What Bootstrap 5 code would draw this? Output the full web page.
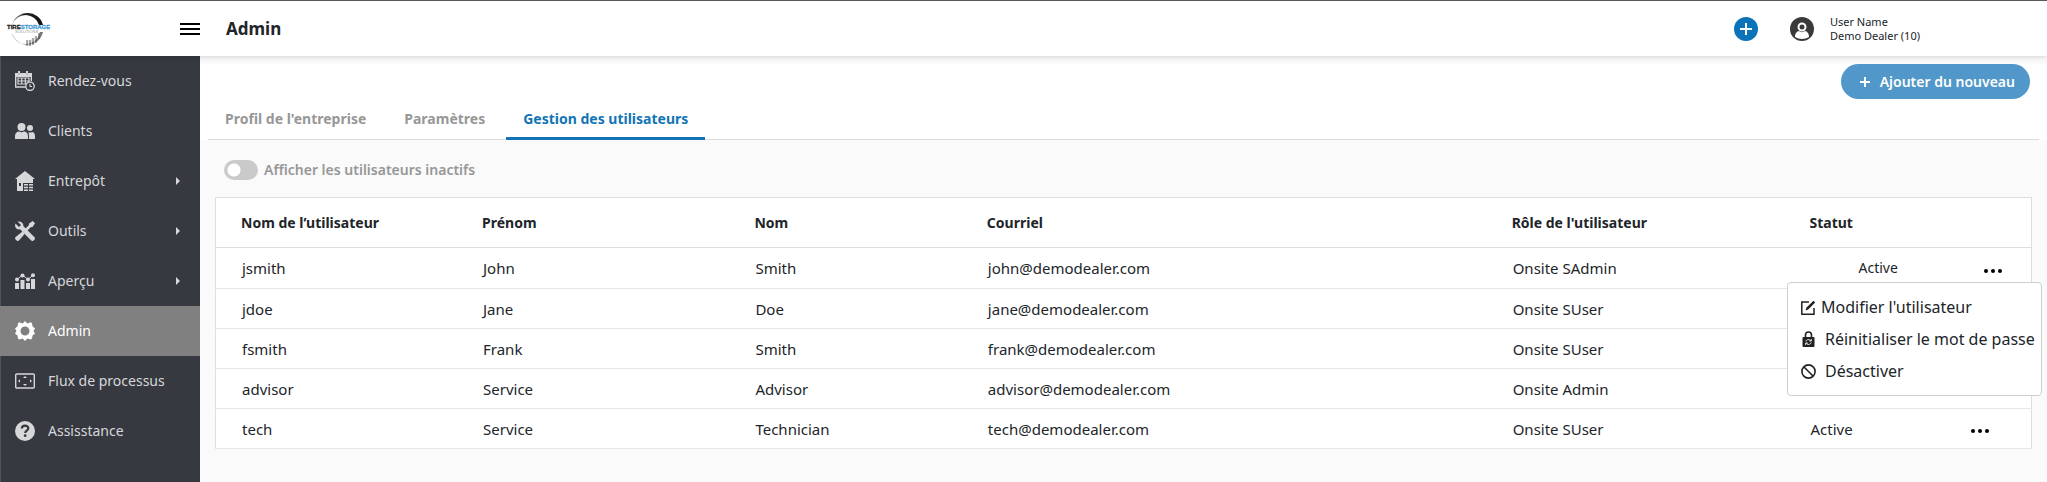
<!DOCTYPE html>
<html lang="fr">
<head>
<meta charset="utf-8">
<meta name="viewport" content="width=device-width, initial-scale=1">
<title>Admin</title>
<link href="https://cdn.jsdelivr.net/npm/bootstrap@5.3.0/dist/css/bootstrap.min.css" rel="stylesheet">
<style>
  body { font-family: "Noto Sans", "Open Sans", sans-serif; font-size: 14px; line-height: 20px; color: #212529; background: #fafafa; }
  .topbar { height: 56px; border-top: 1px solid #58585c; box-shadow: 0 1px 5px rgba(0,0,0,.16); z-index: 2; }
  .brand-area { width: 200px; padding-left: 6px; }
  .page-title { margin-left: 26px; font-size: 17px; line-height: 24px; font-weight: 700; }
  .icon-btn { border: 0; background: none; padding: 0; line-height: 0; color: #000; }
  .user-area { margin-right: 127px; font-size: 11px; line-height: 14px; }
  .side { width: 200px; background: #363940; box-shadow: inset 1px 0 #50545b; }
  .side .nav-link { height: 50px; padding: 0 20px 0 15px; gap: 13px; color: #d6d7d9; font-size: 14px; }
  .side .nav-link.active { background: #808080; color: #fff; }
  .shell { min-height: calc(100vh - 56px); }
  .tab-panel { margin-top: 8px; background: #fff; padding: 0 8px; }
  .add-btn { height: 35px; padding: 0 15px 0 19px; margin-right: 9px; gap: 10px; background: #5197c9; color: #fff; font-size: 14px; font-weight: 600; }
  .add-btn:hover { background: #0b74b5; color: #fff; }
  .tabs { gap: 4px; border-bottom: 1px solid #dcdddf; }
  .tabs .nav-link { height: 41px; padding: 2px 17px 0; margin-bottom: -1px; border-bottom: 3px solid transparent; color: #979797; font-weight: 700; }
  .tabs .nav-link.active { color: #1274b4; border-color: #1274b4; }
  .inactive-switch { padding: 20px 24px 17px; gap: 6px; color: #979797; font-weight: 600; }
  .inactive-switch input { appearance: none; width: 34px; height: 20px; margin: 0; border-radius: 10px; background: radial-gradient(circle at 10px 10px, #fff 6px, #cacaca 7px); }
  .users-wrap { margin: 0 15px; }
  .users { table-layout: fixed; background: #fff; border: 1px solid #dcdee2; }
  .users th { height: 50px; padding: 0 0 0 25px; font-weight: 700; border-bottom: 1px solid #dcdee2; }
  .users td { height: 40px; padding: 0 0 0 26px; border-bottom: 1px solid #e4e6ea; font-size: 15px; }
  .users .opened td { height: 41px; }
  .users td.open-status { padding-left: 74px; font-size: 14px; }
  .users td.open-action { padding-left: 39px; }
  .action-menu { top: 34px; right: -11px; width: 255px; padding: 8px 0; border: 1px solid #ccced1; border-radius: 4px; background: #fff; font-size: 16px; line-height: 24px; z-index: 1; }
  .action-menu button { height: 32px; padding: 0 0 0 13px; gap: 9px; border: 0; background: none; white-space: nowrap; color: #212529; }
  .action-menu .near { gap: 5px; }
</style>
</head>
<body>
<header class="topbar d-flex align-items-center bg-white position-relative">
  <div class="brand-area d-flex align-items-center justify-content-between flex-shrink-0">
    <svg width="44" height="38" viewBox="0 0 44 38" role="img" aria-label="Tire Storage Solutions">
      <defs><linearGradient id="rim"><stop offset="0" stop-color="#999"/><stop offset=".4" stop-color="#222"/><stop offset="1" stop-color="#111"/></linearGradient></defs>
      <path d="M6 15A16 16 0 0 1 37 15H33A15 15 0 0 0 20 5A16 16 0 0 0 6 15z" fill="url(#rim)"/>
      <path d="M6 24A16 16 0 0 0 14 33" fill="none" stroke="#ccc"/>
      <path d="M14 33A16 16 0 0 0 37 22H34A15 15 0 0 1 14 33z" fill="#777"/>
      <path d="M21 30v6M24 30v6M27 28v7M30 26v7M33 23v6" stroke="#555"/>
      <path d="M22.500 30v6M25.500 29v6M28.500 27v7" stroke="#ddd" stroke-width=".7"/>
      <text x="1" y="19" font-size="6" font-weight="700" font-family="Liberation Sans" fill="#222" stroke="#222" stroke-width=".3">TIRE<tspan fill="#3e9bd2" stroke="#3e9bd2">STORAGE</tspan></text>
      <text x="9" y="23" font-size="4" font-family="Liberation Sans" fill="#999">SOLUTIONS</text>
    </svg>
    <button class="icon-btn" aria-label="Menu"><svg width="20" height="12" fill="currentColor"><path d="M0 0h20v2H0zM0 5h20v2H0zM0 10h20v2H0z"/></svg></button>
  </div>
  <h1 class="page-title mb-0 me-auto">Admin</h1>
  <button class="icon-btn me-3" aria-label="Ajouter"><svg width="24" height="24"><circle cx="12" cy="12" r="12" fill="#0b74b9"/><path d="M12 6v12M6 12h12" stroke="#fff" stroke-width="2"/></svg></button>
  <div class="user-area d-flex align-items-center gap-3 ps-3">
    <svg width="24" height="24" viewBox="0 0 24 24"><circle cx="12" cy="12" r="12" fill="#3a3a3b"/><circle cx="12" cy="10" r="3.500" fill="none" stroke="#fff" stroke-width="2"/><path d="M5 20c0-4 2-5.500 4-6 2 1.500 4 1.500 6 0 2 .5 4 2 4 6-4 2.500-10 2.500-14 0z" fill="#fff"/></svg>
    <div>User Name<br>Demo Dealer (10)</div>
  </div>
</header>
<div class="shell d-flex">
  <nav class="side flex-shrink-0 nav flex-column flex-nowrap" aria-label="Navigation principale">
    <a class="nav-link d-flex align-items-center" href="#">
      <svg width="20" height="20" viewBox="0 0 20 20" fill="none" stroke="currentColor"><path d="M.7 3v13h11M.7 3h15.600v7" stroke-width="1.400"/><path d="M0 2h3v1.500h2V2h6v1.500h2V2h4v4H0z" fill="currentColor" stroke="none"/><path d="M3 0h2v2H3zM11 0h2v2h-2z" fill="currentColor" stroke="none"/><path d="M3 7h11v6H3zM3 10h11M6.700 7v6M10.300 7v6" stroke-width="1.200"/><circle cx="15" cy="15.300" r="4.200" fill="#363940" stroke-width="1.300"/><path d="M15 13v2.500h2" stroke-width="1.100"/></svg>
      <span>Rendez-vous</span></a>
    <a class="nav-link d-flex align-items-center" href="#">
      <svg width="20" height="20" viewBox="0 0 20 20" fill="currentColor"><circle cx="6.500" cy="6" r="4"/><circle cx="15" cy="7" r="3"/><path d="M0 18v-3c0-3 2-4.500 4-4.500 2 1 3 1 5 0 2 0 4 1.500 4 4.500v3zM14 18h6v-3c0-2.500-1.500-4-3-4-1.500.7-2.500.7-4 0 .8 1 1 2 1 4z"/></svg>
      <span>Clients</span></a>
    <a class="nav-link d-flex align-items-center" href="#">
      <svg width="20" height="20" viewBox="0 0 20 20" fill="currentColor"><path fill-rule="evenodd" d="M10 0l10 8h-2v12H2V8H0zM4 12v3h2v-3zM8 12v8h10v-8z"/><path d="M9 13h4v1.500H9zM14 13h4v1.500h-4zM9 15.700h4v1.500H9zM14 15.700h4v1.500h-4zM9 18.400h4V20H9zM14 18.400h4V20h-4z"/></svg>
      <span class="me-auto">Entrepôt</span><svg width="4" height="8" fill="currentColor"><path d="M0 0l4 4-4 4z"/></svg></a>
    <a class="nav-link d-flex align-items-center" href="#">
      <svg width="20" height="20" viewBox="0 0 20 20" fill="currentColor"><path d="M2.500.5L6 4 4 6 .5 2.500C-.5 5 .3 7 2 8c1 .6 2 .5 3 .3L16.200 19.500c.7.7 1.700.7 2.400 0l.9-.9c.7-.7.7-1.700 0-2.400L8.300 5C8.800 2 6 0 2.500.5z"/><path d="M17.700 0L20 2.300 17.500 6l-1.800.3-4 4-1.900-2 4-4 .3-1.800zM7.500 10.500l2.300 2.300L4 19.500c-.7.7-1.700.7-2.400 0l-1-1c-.7-.7-.7-1.700 0-2.400z"/></svg>
      <span class="me-auto">Outils</span><svg width="4" height="8" fill="currentColor"><path d="M0 0l4 4-4 4z"/></svg></a>
    <a class="nav-link d-flex align-items-center" href="#">
      <svg width="20" height="20" viewBox="0 0 20 20" fill="currentColor"><path d="M0 12h4v6H0zM5.500 9h4v9h-4zM11 12h4v6h-4zM16 8h4v10h-4z"/><path d="M2 8.500L7.500 4 13 8.500 18 4" fill="none" stroke="currentColor"/><circle cx="2" cy="8.500" r="2"/><circle cx="7.500" cy="4.500" r="2"/><circle cx="13" cy="8.500" r="2"/><circle cx="18" cy="4.200" r="2"/></svg>
      <span class="me-auto">Aperçu</span><svg width="4" height="8" fill="currentColor"><path d="M0 0l4 4-4 4z"/></svg></a>
    <a class="nav-link d-flex align-items-center active" aria-current="page" href="#">
      <svg width="20" height="20" viewBox="0 0 20 20" fill="currentColor"><path fill-rule="evenodd" d="M10 0l2.300 2.500 3.500-1.300 1.200 1 .5 3L20 7.500 18.500 10 20 12.500l-2.500 2-.5 3-1.200 1-3.500-1L10 20l-2.300-2.500-3.500 1-1.200-1-.5-3L0 12.500 1.500 10 0 7.500l2.500-2.300.5-3 1.200-1 3.500 1.300zM10 5.500a4.500 4.500 0 1 0 0 9 4.500 4.500 0 0 0 0-9z"/></svg>
      <span>Admin</span></a>
    <a class="nav-link d-flex align-items-center" href="#">
      <svg width="20" height="20" viewBox="0 0 20 20"><rect x=".7" y="3" width="18.600" height="14" rx="1" fill="none" stroke="currentColor" stroke-width="1.400"/><path d="M10 5l2 2H8zM10 15l2-2H8zM3 10l2-1.700v3.400zM17 10l-2-1.700v3.400z" fill="currentColor"/></svg>
      <span>Flux de processus</span></a>
    <a class="nav-link d-flex align-items-center" href="#">
      <svg width="20" height="20" viewBox="0 0 20 20"><circle cx="10" cy="10" r="10" fill="currentColor"/><path d="M6.800 7.500C7 3.500 13.300 3.700 13.300 7.300 13.300 9.800 10.200 9.600 10.200 12" fill="none" stroke="#363940" stroke-width="2.200"/><circle cx="10.200" cy="14.700" r="1.400" fill="#363940"/></svg>
      <span>Assisstance</span></a>
  </nav>
  <main class="flex-grow-1">
    <section class="tab-panel">
      <div class="d-flex justify-content-end">
        <button class="add-btn btn rounded-pill border-0 d-flex align-items-center"><svg width="10" height="10"><path d="M5 0v10M0 5h10" stroke="#fff" stroke-width="2"/></svg>Ajouter du nouveau</button>
      </div>
      <nav class="tabs nav" aria-label="Sections">
        <a class="nav-link d-flex align-items-center" href="#">Profil de l'entreprise</a>
        <a class="nav-link d-flex align-items-center" href="#">Paramètres</a>
        <a class="nav-link d-flex align-items-center active" aria-current="page" href="#">Gestion des utilisateurs</a>
      </nav>
    </section>
    <div class="inactive-switch d-flex align-items-center">
      <input type="checkbox" role="switch" id="inactifs"><label for="inactifs">Afficher les utilisateurs inactifs</label>
    </div>
    <div class="users-wrap">
      <table class="users w-100">
        <colgroup><col style="width:13.300%"><col style="width:15%"><col style="width:12.800%"><col style="width:28.900%"><col style="width:16.400%"><col style="width:8.800%"><col></colgroup>
        <thead><tr><th>Nom de l’utilisateur</th><th>Prénom</th><th>Nom</th><th>Courriel</th><th>Rôle de l'utilisateur</th><th colspan="2">Statut</th></tr></thead>
        <tbody>
          <tr class="opened"><td>jsmith</td><td>John</td><td>Smith</td><td>john@demodealer.com</td><td>Onsite SAdmin</td><td class="open-status">Active</td>
            <td class="open-action position-relative"><button class="icon-btn" aria-label="Actions" aria-expanded="true"><svg width="20" height="6"><circle cx="3" cy="4" r="2"/><circle cx="10" cy="4" r="2"/><circle cx="17" cy="4" r="2"/></svg></button>
              <div class="action-menu position-absolute">
                <button class="near d-flex align-items-center"><svg width="15" height="15" viewBox="0 0 15 15" fill="none" stroke="#222" stroke-width="1.500"><path d="M8 2H.8v12.200H13V8"/><path d="M4.500 10.500l1-3L12.500.8l1.700 1.700-7 7z" fill="#222" stroke="none"/></svg>Modifier l'utilisateur</button>
                <button class="d-flex align-items-center"><svg width="15" height="16" viewBox="0 0 15 16"><path d="M4.500 7V4a3 3 0 0 1 6 0v3" fill="none" stroke="#222" stroke-width="1.600"/><rect x="1.500" y="6" width="12" height="10" rx="1" fill="#222"/><path d="M4.800 10.500c.8-2.500 4-2.500 5-.5M10.200 11.500c-.8 2.500-4 2.500-5 .5M10.300 8v2H8.300M4.700 14v-2h2" fill="none" stroke="#fff" stroke-width=".9"/></svg>Réinitialiser le mot de passe</button>
                <button class="d-flex align-items-center"><svg width="15" height="15" viewBox="0 0 15 15" fill="none" stroke="#222" stroke-width="1.600"><circle cx="7.500" cy="7.500" r="6.600"/><path d="M3 3l9 9"/></svg>Désactiver</button>
              </div></td></tr>
          <tr><td>jdoe</td><td>Jane</td><td>Doe</td><td>jane@demodealer.com</td><td>Onsite SUser</td><td></td><td></td></tr>
          <tr><td>fsmith</td><td>Frank</td><td>Smith</td><td>frank@demodealer.com</td><td>Onsite SUser</td><td></td><td></td></tr>
          <tr><td>advisor</td><td>Service</td><td>Advisor</td><td>advisor@demodealer.com</td><td>Onsite Admin</td><td></td><td></td></tr>
          <tr><td>tech</td><td>Service</td><td>Technician</td><td>tech@demodealer.com</td><td>Onsite SUser</td><td>Active</td>
            <td><button class="icon-btn" aria-label="Actions"><svg width="20" height="6"><circle cx="3" cy="4" r="2"/><circle cx="10" cy="4" r="2"/><circle cx="17" cy="4" r="2"/></svg></button></td></tr>
        </tbody>
      </table>
    </div>
  </main>
</div>
<script src="https://cdn.jsdelivr.net/npm/bootstrap@5.3.0/dist/js/bootstrap.bundle.min.js"></script>
</body>
</html>
